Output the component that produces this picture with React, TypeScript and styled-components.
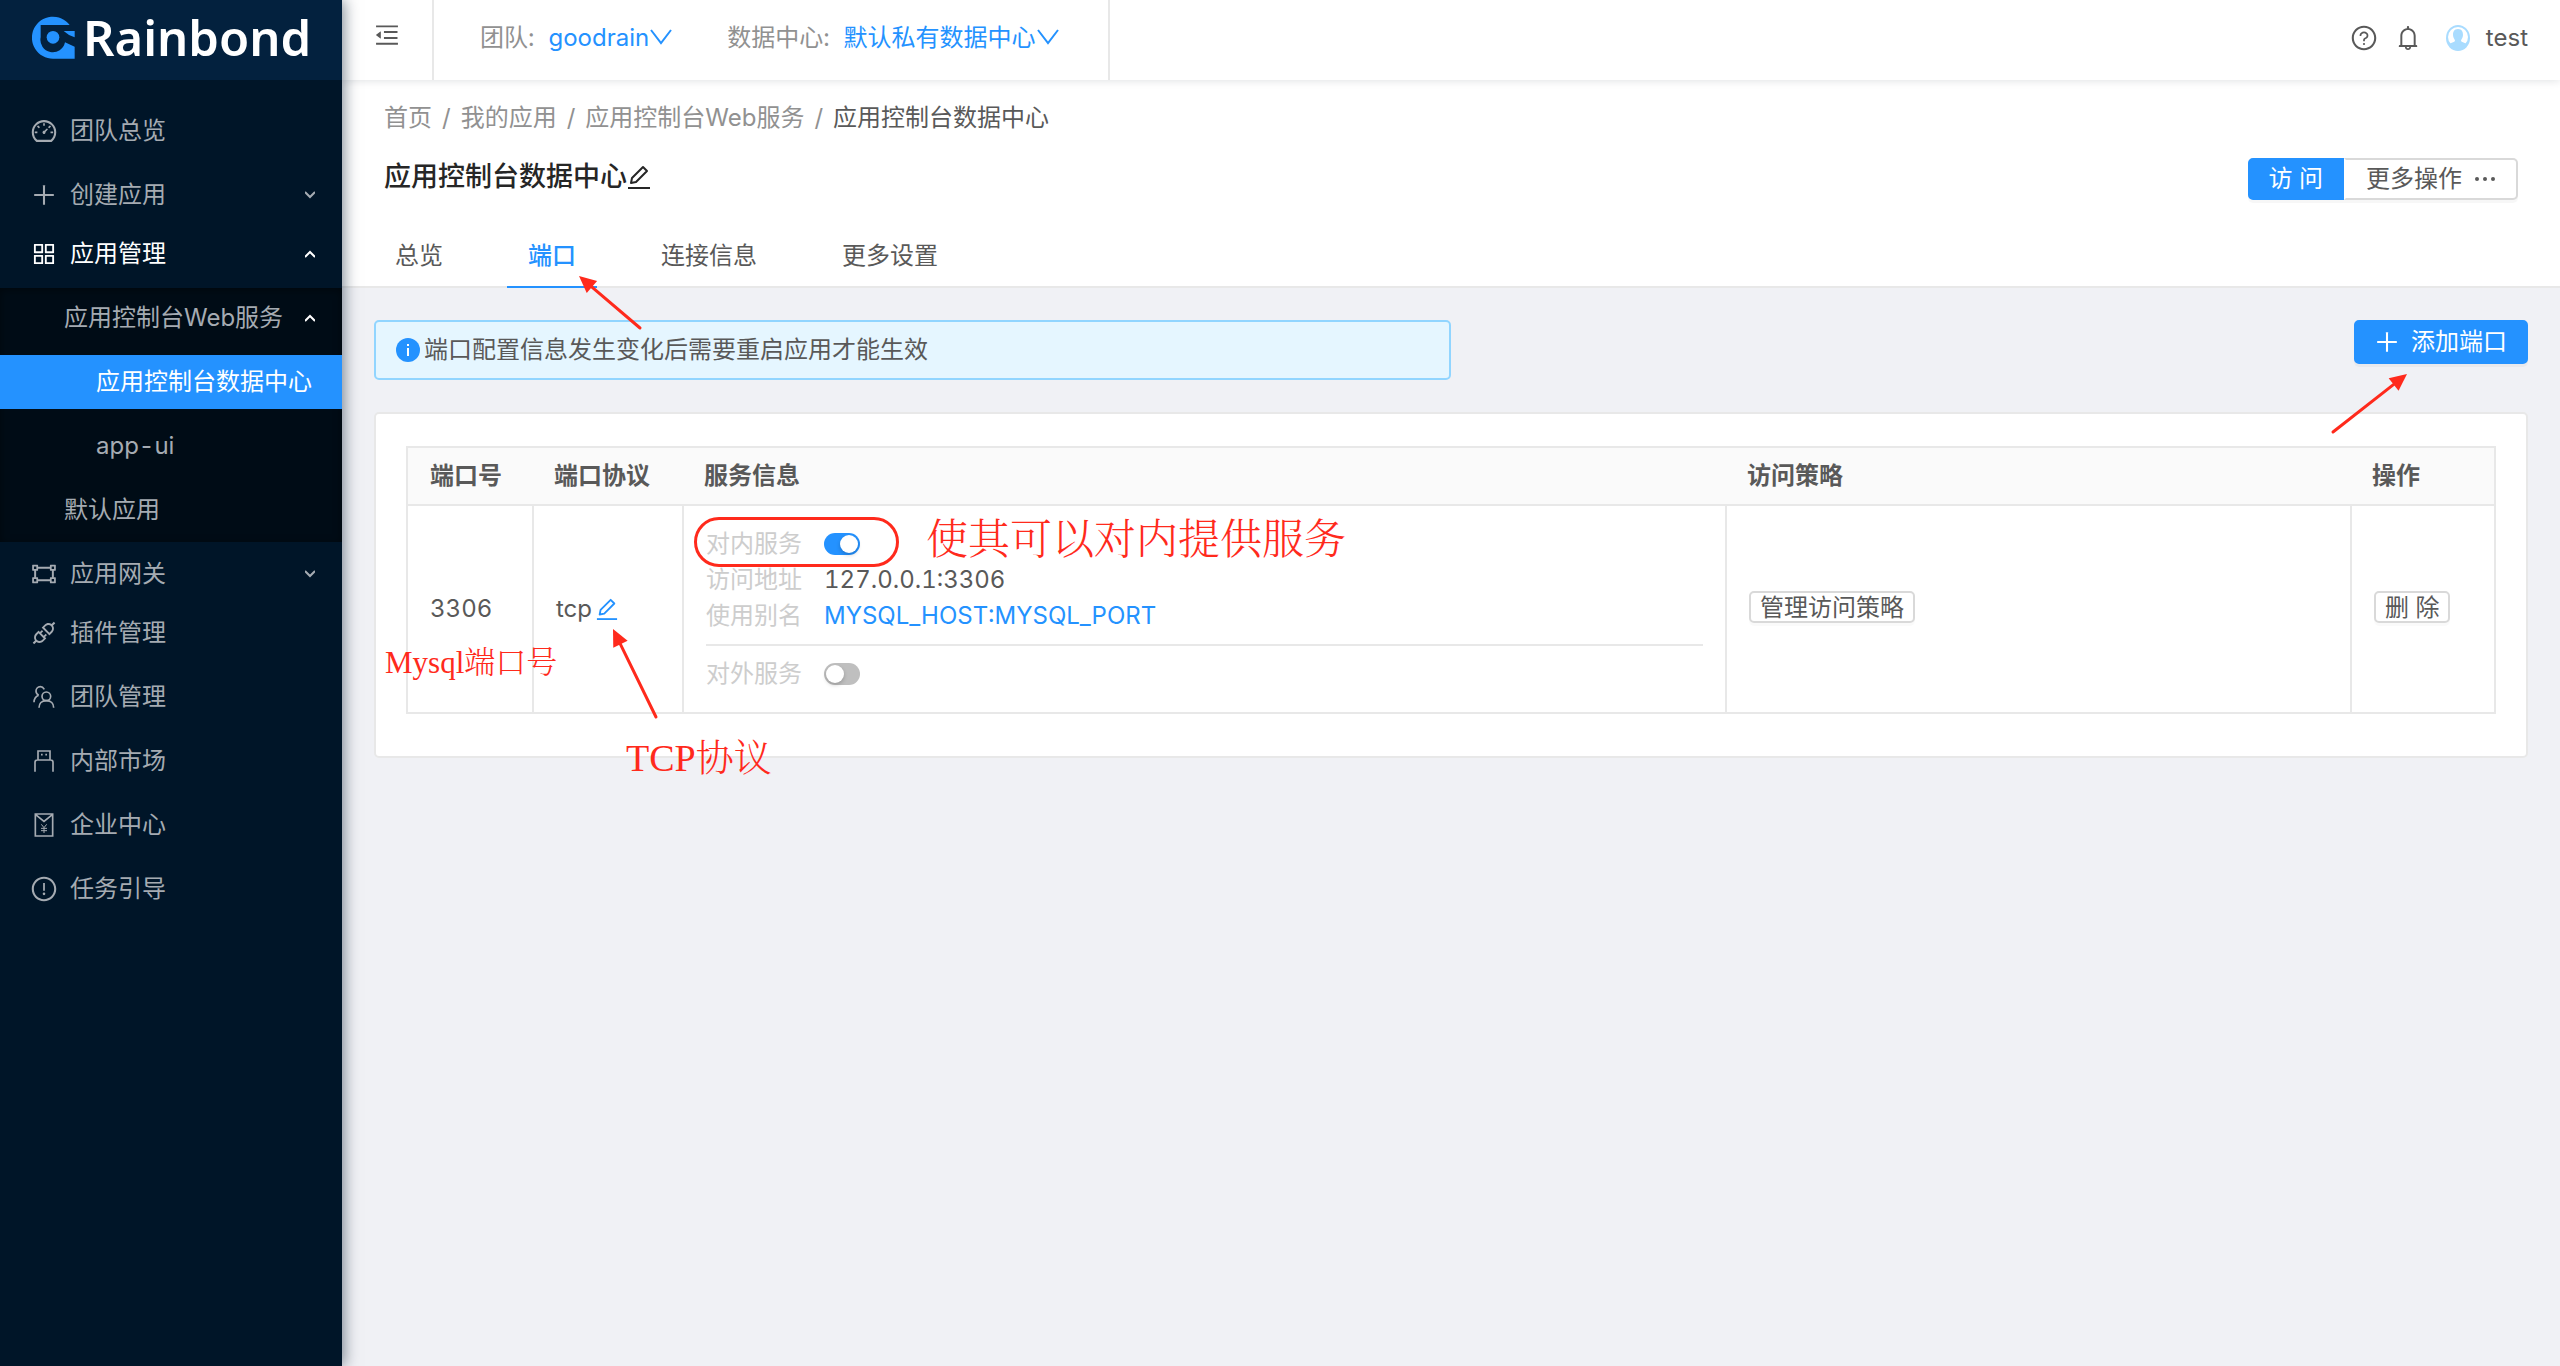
import React from 'react';
import styled, { createGlobalStyle, css } from 'styled-components';
import {
  AiOutlineApi,
  AiOutlineAppstore,
  AiOutlineBell,
  AiOutlineDashboard,
  AiOutlineExclamationCircle,
  AiOutlineGateway,
  AiOutlineMenuFold,
  AiOutlinePlus,
  AiOutlineQuestionCircle,
} from 'react-icons/ai';

const blue = '#2492ff';
const line = '#e8e8e8';
const red = '#ff2a1c';

const GlobalStyle = createGlobalStyle`
  *, *::before, *::after { box-sizing: border-box; }
  body {
    margin: 0;
    background: #f0f1f5;
    color: #595959;
    font: 24px/36px Inter, "Noto Sans CJK SC", sans-serif;
    font-variant-numeric: tabular-nums;
  }
  button, input { font: inherit; color: inherit; margin: 0; }
  a { color: inherit; text-decoration: none; }
  ul, ol { list-style: none; margin: 0; padding: 0; }
  svg { display: block; flex: none; }
`;

/* ---------- layout ---------- */

const Layout = styled.div`
  display: grid;
  grid-template-columns: 342px minmax(0, 1fr);
  min-height: 100vh;
`;

const Sidebar = styled.aside`
  z-index: 2;
  background: #001528;
  color: #a5abb2;
  box-shadow: 2px 0 14px rgba(0, 21, 41, 0.5);
`;

const Main = styled.div`
  display: flex;
  flex-direction: column;
  min-width: 0;
`;

/* ---------- sidebar ---------- */

const Brand = styled.a`
  display: flex;
  align-items: center;
  gap: 8px;
  height: 80px;
  padding: 0 30px 6px 32px;
  background: #03213e;
  color: #fff;
  font: 600 49px/74px "Noto Sans", "Open Sans", sans-serif;
`;

const Menu = styled.ul`
  padding-top: 19px;
`;

const MenuItem = styled.li`
  padding: 5px 0;
`;

const MenuGroup = styled.li`
  padding-top: 5px;
`;

const rowStyle = css<{ $level?: number; $open?: boolean; $active?: boolean }>`
  display: flex;
  align-items: center;
  gap: 14px;
  width: 100%;
  height: 54px;
  padding: 0 27px 0 ${(p) => 32 * (p.$level ?? 1)}px;
  border: 0;
  background: ${(p) => (p.$active ? blue : 'transparent')};
  color: ${(p) => (p.$active || p.$open ? '#fff' : 'inherit')};
  text-align: left;
  white-space: nowrap;

  > svg:first-child {
    width: 28px;
    height: 28px;
    margin: 0 -2px;
  }
`;

const MenuLink = styled.a`
  ${rowStyle}
`;

const MenuToggle = styled.button`
  ${rowStyle}
  cursor: pointer;
`;

const ToggleText = styled.span<{ $muted?: boolean }>`
  flex: 1;
  color: ${(p) => (p.$muted ? '#a5abb2' : 'inherit')};
`;

const SubMenu = styled.ul`
  margin-top: 7px;
  background: #000c16;
  box-shadow: inset 0 2px 8px rgba(0, 0, 0, 0.45);

  > ${MenuGroup} { padding-top: 3px; }
`;

const NestedMenu = styled.ul`
  padding-top: 5px;
`;

/* ---------- top bar ---------- */

const TopBar = styled.header`
  position: relative;
  z-index: 1;
  display: flex;
  align-items: stretch;
  height: 80px;
  background: #fff;
  box-shadow: 0 1px 8px rgba(0, 21, 41, 0.12);
`;

const FoldButton = styled.button`
  display: flex;
  align-items: center;
  justify-content: center;
  width: 92px;
  padding: 0 0 10px;
  border: 0;
  border-right: 2px solid ${line};
  background: none;
`;

const Scope = styled.div`
  display: flex;
  align-items: center;
  gap: 54px;
  padding: 0 48px 4px 46px;
  border-right: 2px solid ${line};
`;

const ScopeEntry = styled.div`
  display: flex;
  gap: 14px;
  color: #919191;
`;

const ScopeButton = styled.button`
  display: flex;
  align-items: center;
  padding: 0;
  border: 0;
  background: none;
  color: ${blue};
`;

const UserTools = styled.div`
  display: flex;
  align-items: center;
  margin-left: auto;
  padding: 0 32px 4px 0;
  gap: 16px;
`;

const IconButton = styled.button`
  display: flex;
  padding: 0;
  border: 0;
  background: none;
`;

const UserLink = styled.a`
  display: flex;
  align-items: center;
  gap: 16px;
  margin-left: 8px;
`;

/* ---------- page heading ---------- */

const PageHead = styled.section`
  padding: 20px 32px 0;
  border-bottom: 2px solid ${line};
  background: #fff;
`;

const Crumbs = styled.ol`
  display: flex;
  padding: 0 10px;
  color: #919191;

  li + li::before {
    content: "/";
    padding: 0 10px;
  }
  li:last-child a { color: #595959; }
`;

const TitleRow = styled.div`
  display: flex;
  justify-content: space-between;
  align-items: flex-start;
  margin-top: 22px;
  padding: 0 10px;
`;

const Title = styled.h1`
  display: flex;
  align-items: center;
  margin: 0;
  color: #262626;
  font-size: 27px;
  font-weight: 500;
  line-height: 38px;
`;

const ButtonGroup = styled.div`
  display: flex;
`;

const Button = styled.button<{ $primary?: boolean; $side?: 'left' | 'right' }>`
  display: flex;
  align-items: center;
  gap: 12px;
  height: ${(p) => (p.$side ? 42 : 44)}px;
  padding: 0 ${(p) => (p.$side === 'right' ? 20 : 19)}px;
  border: 2px solid ${(p) => (p.$primary ? blue : '#d9d9d9')};
  border-radius: ${(p) => (p.$side === 'left' ? '5px 0 0 5px' : p.$side === 'right' ? '0 5px 5px 0' : '5px')};
  border-left-color: ${(p) => (p.$primary ? blue : 'transparent')};
  background: ${(p) => (p.$primary ? blue : '#fff')};
  color: ${(p) => (p.$primary ? '#fff' : '#595959')};
  box-shadow: 0 3px 0 rgba(0, 0, 0, 0.03);
  white-space: nowrap;

  > svg { margin: 0 -2px; }
`;

const SmallButton = styled.button`
  display: block;
  height: 32px;
  margin-bottom: 5px;
  padding: 3px 9px 0;
  border: 2px solid #d9d9d9;
  border-radius: 5px;
  background: #fff;
  line-height: 24px;
  white-space: nowrap;
  box-shadow: 0 3px 0 rgba(0, 0, 0, 0.02);
`;

const Tabs = styled.nav`
  display: flex;
  gap: 43px;
  margin: 26px 0 -2px;
`;

const Tab = styled.a<{ $active?: boolean }>`
  position: relative;
  padding: 12px 21px;
  border-bottom: 2px solid ${(p) => (p.$active ? blue : 'transparent')};
  color: ${(p) => (p.$active ? blue : 'inherit')};
  font-weight: ${(p) => (p.$active ? 500 : 400)};
`;

/* ---------- content ---------- */

const Content = styled.main`
  display: flex;
  flex-direction: column;
  gap: 32px;
  padding: 32px;
`;

const ActionRow = styled.div`
  display: grid;
  grid-template-columns: 1fr 1fr;
  align-items: start;
  justify-items: end;
`;

const Notice = styled.p`
  display: flex;
  align-items: center;
  gap: 4px;
  width: 100%;
  margin: 0;
  padding: 10px 20px;
  border: 2px solid #91d5ff;
  border-radius: 5px;
  background: #e5f6ff;
`;

const Anchor = styled.div`
  position: relative;
`;

const Card = styled.section`
  padding: 32px 30px 42px;
  border: 2px solid ${line};
  border-radius: 5px;
  background: #fff;
`;

const PortTable = styled.table`
  width: 100%;
  table-layout: fixed;
  border: 2px solid ${line};
  border-spacing: 0;

  th {
    padding: 10px 22px;
    border-bottom: 2px solid ${line};
    background: #fafafa;
    font-weight: 600;
    text-align: left;
    white-space: nowrap;
  }
  td {
    position: relative;
    padding: 20px 22px;
  }
  td + td { border-left: 2px solid ${line}; }
`;

const Col = styled.col<{ $width?: string }>`
  width: ${(p) => p.$width ?? 'auto'};
`;

const Protocol = styled.div`
  display: flex;
  align-items: center;
  gap: 4px;
`;

const EditButton = styled(IconButton)`
  color: ${blue};
`;

const ServiceRow = styled.div`
  position: relative;
  display: flex;
  align-items: center;
  gap: 22px;
`;

const ServiceLabel = styled.label`
  color: #cdcdcd;
`;

const ServiceLink = styled.a`
  color: ${blue};
`;

const Divider = styled.hr`
  margin: 10px 0;
  border: 0;
  border-top: 2px solid ${line};
`;

const Switch = styled.input.attrs({ type: 'checkbox', role: 'switch' })`
  appearance: none;
  display: flex;
  width: 36px;
  height: 22px;
  padding: 2px;
  border-radius: 11px;
  background: #bfbfbf;

  &::before {
    content: "";
    width: 18px;
    height: 18px;
    border-radius: 50%;
    background: #fff;
    box-shadow: 0 2px 4px rgba(0, 0, 0, 0.2);
  }
  &:checked { background: ${blue}; justify-content: flex-end; }
`;

/* ---------- hand-placed notes over the page ---------- */

const NoteText = styled.span<{ $x: number; $y: number; $size: number }>`
  position: absolute;
  z-index: 1;
  left: ${(p) => p.$x}px;
  top: ${(p) => p.$y}px;
  color: ${red};
  font: ${(p) => p.$size}px/48px "Liberation Serif", "Noto Serif CJK SC", "Noto Sans CJK SC", serif;
  font-weight: 300;
  white-space: nowrap;
  pointer-events: none;
`;

const NoteRing = styled.span`
  position: absolute;
  left: -12px;
  top: -9px;
  width: 205px;
  height: 50px;
  border: 3px solid ${red};
  border-radius: 25px;
  pointer-events: none;
`;

const NoteSvg = styled.svg<{ $x: number; $y: number }>`
  position: absolute;
  z-index: 1;
  left: ${(p) => p.$x}px;
  top: ${(p) => p.$y}px;
  overflow: visible;
  pointer-events: none;
`;

type ArrowProps = { x: number; y: number; dx: number; dy: number };

/* The tip sits at (x, y); the tail is dx, dy away from it. */
function Arrow({ x, y, dx, dy }: ArrowProps) {
  const length = Math.hypot(dx, dy);
  const angle = (Math.atan2(dy, dx) * 180) / Math.PI;
  return (
    <NoteSvg $x={x} $y={y} width="1" height="1" aria-hidden="true">
      <g transform={`rotate(${angle})`} fill={red}>
        <path d="M0 0L17 -8V8Z" />
        <path d={`M14 0H${length}`} stroke={red} strokeWidth="3" strokeLinecap="round" />
      </g>
    </NoteSvg>
  );
}

/* ---------- icons ---------- */

const Logo = () => (
  <svg width="43" height="43" viewBox="97 47 129 129" fill={blue} aria-hidden="true">
    <path d="M210 74H123V111A37 37 0 0 0 196 126L225 139V175H160A63 63 0 1 1 210 74Z" />
    <circle cx="160" cy="111" r="19" />
    <path d="M192 92H225V111L208 104Z" />
  </svg>
);

const TeamIcon = () => (
  <svg width="28" height="28" viewBox="-9 -9 84 84" fill="none" stroke="currentColor" strokeWidth="5" aria-hidden="true">
    <circle cx="40" cy="31" r="13" />
    <path d="M18 65C18 53 26 44 40 44S62 53 62 65M34 10C31 5 27 2 22 2C14 2 9 8 9 15C9 21 12 25 17 28M17 28C8 32 3 40 3 49" />
  </svg>
);

const MarketIcon = () => (
  <svg width="28" height="28" viewBox="90 618 84 84" fill="none" stroke="currentColor" strokeWidth="5" aria-hidden="true">
    <path d="M114 656V630H150V656M105 692V664Q105 657 112 657H152Q159 657 159 664V692" />
    <path d="M123 641H128M136 641H141" />
  </svg>
);

const EnvelopeIcon = () => (
  <svg width="28" height="28" viewBox="90 810 84 84" fill="none" stroke="currentColor" strokeWidth="5" aria-hidden="true">
    <path d="M106 819H158V885H106ZM107 821L132 841L157 821" />
    <path d="M124 850L132 860L140 850M132 860V876M123 862H141M123 869H141" strokeWidth="3" />
  </svg>
);

const EditIcon = ({ size = 24 }: { size?: number }) => (
  <svg width={size} height={size} viewBox="0 0 24 24" fill="none" stroke="currentColor" strokeWidth="2" aria-hidden="true">
    <path d="M1 23H23" />
    <path d="M4 18L5 13L16 2L20 6L9 17Z" strokeLinejoin="round" />
  </svg>
);

const Caret = ({ up }: { up?: boolean }) => (
  <svg width="10" height="8" viewBox="0 0 10 8" fill="none" stroke="currentColor" strokeWidth="2" aria-hidden="true">
    <path d={up ? 'M0 7L5 2L10 7' : 'M0 1L5 6L10 1'} />
  </svg>
);

const WideCaret = () => (
  <svg width="24" height="24" viewBox="0 0 24 24" fill="none" stroke="currentColor" strokeWidth="2" aria-hidden="true">
    <path d="M2 4L12 17L22 4" />
  </svg>
);

const DotsIcon = () => (
  <svg width="26" height="24" viewBox="-2 0 26 24" fill="currentColor" aria-hidden="true">
    <circle cx="3" cy="12" r="2" />
    <circle cx="11" cy="12" r="2" />
    <circle cx="19" cy="12" r="2" />
  </svg>
);

const InfoIcon = () => (
  <svg width="24" height="24" viewBox="0 0 24 24" aria-hidden="true">
    <circle cx="12" cy="12" r="12" fill={blue} />
    <path d="M12 10V18M12 6V8" stroke="#fff" strokeWidth="2" />
  </svg>
);

const Avatar = () => (
  <svg width="24" height="26" viewBox="0 0 24 26" aria-hidden="true">
    <ellipse cx="12" cy="13" rx="12" ry="13" fill="#a9dcff" />
    <ellipse cx="12" cy="12" rx="10" ry="10" fill="#fff" />
    <path d="M12 4C8 4 7 7 7 10C7 13 9 14 9 16C8 18 4 17 3 20C6 25 18 25 21 20C20 17 16 18 15 16C15 14 17 13 17 10C17 7 16 4 12 4Z" fill="#a9dcff" />
  </svg>
);

/* ---------- page ---------- */

const lowerMenu = [
  { text: '插件管理', icon: <AiOutlineApi /> },
  { text: '团队管理', icon: <TeamIcon /> },
  { text: '内部市场', icon: <MarketIcon /> },
  { text: '企业中心', icon: <EnvelopeIcon /> },
  { text: '任务引导', icon: <AiOutlineExclamationCircle /> },
];

const crumbs = ['首页', '我的应用', '应用控制台Web服务', '应用控制台数据中心'];

function SideMenu() {
  return (
    <Sidebar>
      <Brand href="#">
        <Logo />
        Rainbond
      </Brand>
      <nav>
        <Menu>
          <MenuItem>
            <MenuLink href="#"><AiOutlineDashboard />团队总览</MenuLink>
          </MenuItem>
          <MenuGroup>
            <MenuToggle><AiOutlinePlus /><ToggleText>创建应用</ToggleText><Caret /></MenuToggle>
          </MenuGroup>
          <MenuGroup>
            <MenuToggle $open><AiOutlineAppstore /><ToggleText>应用管理</ToggleText><Caret up /></MenuToggle>
            <SubMenu>
              <MenuGroup>
                <MenuToggle $level={2} $open><ToggleText $muted>应用控制台Web服务</ToggleText><Caret up /></MenuToggle>
                <NestedMenu>
                  <MenuItem><MenuLink href="#" $level={3} $active>应用控制台数据中心</MenuLink></MenuItem>
                  <MenuItem><MenuLink href="#" $level={3}>app-ui</MenuLink></MenuItem>
                </NestedMenu>
              </MenuGroup>
              <MenuItem><MenuLink href="#" $level={2}>默认应用</MenuLink></MenuItem>
            </SubMenu>
          </MenuGroup>
          <MenuGroup>
            <MenuToggle><AiOutlineGateway /><ToggleText>应用网关</ToggleText><Caret /></MenuToggle>
          </MenuGroup>
          {lowerMenu.map(({ text, icon }) => (
            <MenuItem key={text}><MenuLink href="#">{icon}{text}</MenuLink></MenuItem>
          ))}
        </Menu>
      </nav>
    </Sidebar>
  );
}

function PortRow() {
  return (
    <tr>
      <td>
        3306
        <NoteText $x={-23} $y={133} $size={31}>Mysql端口号</NoteText>
      </td>
      <td>
        <Protocol>
          tcp
          <EditButton aria-label="修改端口协议"><EditIcon size={22} /></EditButton>
        </Protocol>
        <Arrow x={79} y={123} dx={43} dy={88} />
        <NoteText $x={92} $y={228} $size={38}>TCP协议</NoteText>
      </td>
      <td>
        <ServiceRow>
          <ServiceLabel htmlFor="inner">对内服务</ServiceLabel>
          <Switch id="inner" defaultChecked />
          <NoteRing />
          <NoteText $x={220} $y={-10} $size={42}>使其可以对内提供服务</NoteText>
        </ServiceRow>
        <ServiceRow>
          <ServiceLabel as="span">访问地址</ServiceLabel>
          127.0.0.1:3306
        </ServiceRow>
        <ServiceRow>
          <ServiceLabel as="span">使用别名</ServiceLabel>
          <ServiceLink href="#">MYSQL_HOST:MYSQL_PORT</ServiceLink>
        </ServiceRow>
        <Divider />
        <ServiceRow>
          <ServiceLabel htmlFor="outer">对外服务</ServiceLabel>
          <Switch id="outer" />
        </ServiceRow>
      </td>
      <td><SmallButton>管理访问策略</SmallButton></td>
      <td><SmallButton>删 除</SmallButton></td>
    </tr>
  );
}

export default function App() {
  return (
    <>
      <GlobalStyle />
      <Layout>
        <SideMenu />
        <Main>
          <TopBar>
            <FoldButton aria-label="收起菜单"><AiOutlineMenuFold size={28} /></FoldButton>
            <Scope>
              <ScopeEntry>团队:<ScopeButton>goodrain<WideCaret /></ScopeButton></ScopeEntry>
              <ScopeEntry>数据中心:<ScopeButton>默认私有数据中心<WideCaret /></ScopeButton></ScopeEntry>
            </Scope>
            <UserTools>
              <IconButton aria-label="帮助"><AiOutlineQuestionCircle size={28} /></IconButton>
              <IconButton aria-label="通知"><AiOutlineBell size={28} /></IconButton>
              <UserLink href="#"><Avatar />test</UserLink>
            </UserTools>
          </TopBar>
          <PageHead>
            <Crumbs>
              {crumbs.map((name) => (
                <li key={name}><a href="#">{name}</a></li>
              ))}
            </Crumbs>
            <TitleRow>
              <Title>
                应用控制台数据中心
                <IconButton aria-label="修改名称"><EditIcon /></IconButton>
              </Title>
              <ButtonGroup>
                <Button $primary $side="left">访 问</Button>
                <Button $side="right">更多操作<DotsIcon /></Button>
              </ButtonGroup>
            </TitleRow>
            <Tabs>
              <Tab href="#">总览</Tab>
              <Tab href="#" $active>
                端口
                <Arrow x={72} y={50} dx={61} dy={52} />
              </Tab>
              <Tab href="#">连接信息</Tab>
              <Tab href="#">更多设置</Tab>
            </Tabs>
          </PageHead>
          <Content>
            <ActionRow>
              <Notice><InfoIcon />端口配置信息发生变化后需要重启应用才能生效</Notice>
              <Anchor>
                <Button $primary><AiOutlinePlus size={28} />添加端口</Button>
                <Arrow x={53} y={54} dx={-74} dy={58} />
              </Anchor>
            </ActionRow>
            <Card>
              <PortTable>
                <colgroup>
                  <Col $width="124px" />
                  <Col $width="150px" />
                  <Col $width="50%" />
                  <Col />
                  <Col $width="144px" />
                </colgroup>
                <thead>
                  <tr>
                    <th scope="col">端口号</th>
                    <th scope="col">端口协议</th>
                    <th scope="col">服务信息</th>
                    <th scope="col">访问策略</th>
                    <th scope="col">操作</th>
                  </tr>
                </thead>
                <tbody>
                  <PortRow />
                </tbody>
              </PortTable>
            </Card>
          </Content>
        </Main>
      </Layout>
    </>
  );
}
